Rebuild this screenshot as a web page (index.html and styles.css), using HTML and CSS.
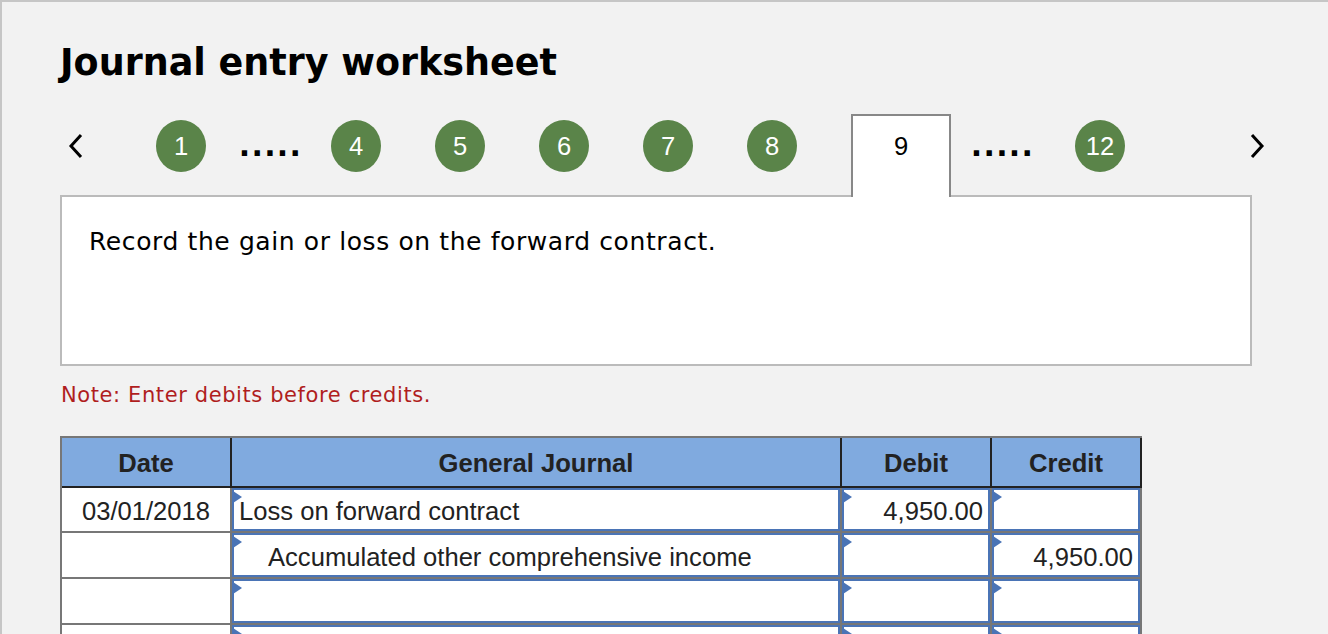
FILE: index.html
```html
<!DOCTYPE html>
<html lang="en">
<head>
<meta charset="utf-8">
<title>Journal entry worksheet</title>
<link rel="stylesheet" href="styles.css">
</head>
<body>
<div class="frame">
  <h1 class="title">Journal entry worksheet</h1>
  <div class="nav">
    <span class="arrow arrow-prev"><svg width="20" height="26" viewBox="0 0 20 26"><polyline points="15,2 5,13 15,24" fill="none" stroke="#000" stroke-width="3"/></svg></span>
    <span class="step step-1">1</span>
    <span class="dots dots-a">.....</span>
    <span class="step step-4">4</span>
    <span class="step step-n">5</span>
    <span class="step step-n">6</span>
    <span class="step step-n">7</span>
    <span class="step step-n">8</span>
    <span class="tab">9</span>
    <span class="dots dots-b">.....</span>
    <span class="step step-12">12</span>
    <span class="arrow arrow-next"><svg width="20" height="26" viewBox="0 0 20 26"><polyline points="5,2 15,13 5,24" fill="none" stroke="#000" stroke-width="3"/></svg></span>
  </div>
  <div class="prompt">Record the gain or loss on the forward contract.</div>
  <p class="note">Note: Enter debits before credits.</p>
  <div class="journal">
    <div class="th">Date</div>
    <div class="th">General Journal</div>
    <div class="th">Debit</div>
    <div class="th">Credit</div>

    <div class="td date">03/01/2018</div>
    <div class="td"><div class="inp">Loss on forward contract</div></div>
    <div class="td"><div class="inp num">4,950.00</div></div>
    <div class="td"><div class="inp num"></div></div>

    <div class="td date"></div>
    <div class="td"><div class="inp indent">Accumulated other comprehensive income</div></div>
    <div class="td"><div class="inp num"></div></div>
    <div class="td"><div class="inp num">4,950.00</div></div>

    <div class="td date"></div>
    <div class="td"><div class="inp"></div></div>
    <div class="td"><div class="inp num"></div></div>
    <div class="td"><div class="inp num"></div></div>

    <div class="td date"></div>
    <div class="td"><div class="inp"></div></div>
    <div class="td"><div class="inp num"></div></div>
    <div class="td"><div class="inp num"></div></div>
  </div>
</div>
</body>
</html>
```
FILE: styles.css
```css
html, body {
  margin: 0;
  padding: 0;
  background: #f2f2f2;
  overflow: hidden;
}
.frame {
  box-sizing: border-box;
  height: 634px;
  border-top: 2px solid #c6c6c6;
  border-left: 2px solid #c6c6c6;
  padding-left: 58px;
}
.title {
  margin: 40px 0 0 0;
  font-family: "DejaVu Sans", Verdana, sans-serif;
  font-weight: bold;
  font-size: 36.5px;
  line-height: 42px;
  color: #000;
}
.nav {
  margin-top: 30px;
  display: flex;
  align-items: flex-start;
  height: 83px;
  font-family: "Liberation Sans", Arial, sans-serif;
}
.arrow {
  margin-top: 19px;
  display: block;
}
.arrow svg { display: block; }
.arrow-prev { margin-left: 6px; }
.arrow-next { margin-left: 122px; }
.step {
  flex: none;
  width: 50px;
  height: 52px;
  margin-top: 6px;
  border-radius: 50%;
  background: #5a8449;
  color: #fff;
  font-size: 25.6px;
  line-height: 52px;
  text-align: center;
}
.step-1 { margin-left: 70px; }
.step-4 { margin-left: 27px; }
.step-n { margin-left: 54px; }
.step-12 { margin-left: 39px; }
.dots {
  flex: none;
  box-sizing: border-box;
  width: 70px;
  padding-left: 3px;
  text-align: center;
  font-family: "DejaVu Sans", Verdana, sans-serif;
  font-weight: bold;
  font-size: 30px;
  line-height: 30px;
  margin-top: 17px;
  letter-spacing: 1.3px;
}
.dots-a { margin-left: 28px; }
.dots-b { margin-left: 15px; }
.tab {
  position: relative;
  z-index: 1;
  flex: none;
  box-sizing: border-box;
  width: 100px;
  height: 83px;
  margin-left: 54px;
  background: #fff;
  border: 2px solid #888;
  border-bottom: none;
  text-align: center;
  font-size: 25.6px;
  line-height: 60px;
  color: #000;
}
.prompt {
  box-sizing: border-box;
  margin-top: -2px;
  width: 1192px;
  height: 171px;
  background: #fff;
  border: 2px solid #bbb;
  padding: 30px 0 0 27px;
  font-family: "DejaVu Sans", Verdana, sans-serif;
  font-size: 25px;
  letter-spacing: 0.6px;
  line-height: 30px;
  color: #000;
}
.note {
  margin: 16px 0 0 1px;
  font-family: "DejaVu Sans", Verdana, sans-serif;
  font-size: 21px;
  letter-spacing: 0.6px;
  line-height: 26px;
  color: #b01e1e;
}
.journal {
  margin-top: 28px;
  display: grid;
  grid-template-columns: 170px 610px 150px 150px;
  grid-template-rows: 50px 45px 46px 46px 46px;
  width: 1082px;
  box-sizing: border-box;
  border-left: 2px solid #777;
  border-top: 2px solid #777;
  font-family: "Liberation Sans", Arial, sans-serif;
  font-size: 25.6px;
  color: #222;
}
.th {
  box-sizing: border-box;
  background: #80aadf;
  border-right: 2px solid #222;
  border-bottom: 2px solid #222;
  font-weight: bold;
  text-align: center;
  line-height: 51px;
}
.td {
  box-sizing: border-box;
  border-right: 2px solid #777;
  border-bottom: 2px solid #777;
  background: #fff;
  display: flex;
}
.date {
  justify-content: center;
  align-items: center;
  padding-top: 3px;
}
.inp {
  position: relative;
  flex: 1;
  box-sizing: border-box;
  border: 2px solid #4a74b6;
  background: #fff;
  padding: 4px 5px 0 5px;
  display: flex;
  align-items: center;
  white-space: nowrap;
}
.inp::before {
  content: "";
  position: absolute;
  left: -1px;
  top: 1px;
  width: 0;
  height: 0;
  border-top: 6px solid transparent;
  border-bottom: 6px solid transparent;
  border-left: 9px solid #4a74b6;
}
.num { justify-content: flex-end; }
.indent { padding-left: 34px; }
```
